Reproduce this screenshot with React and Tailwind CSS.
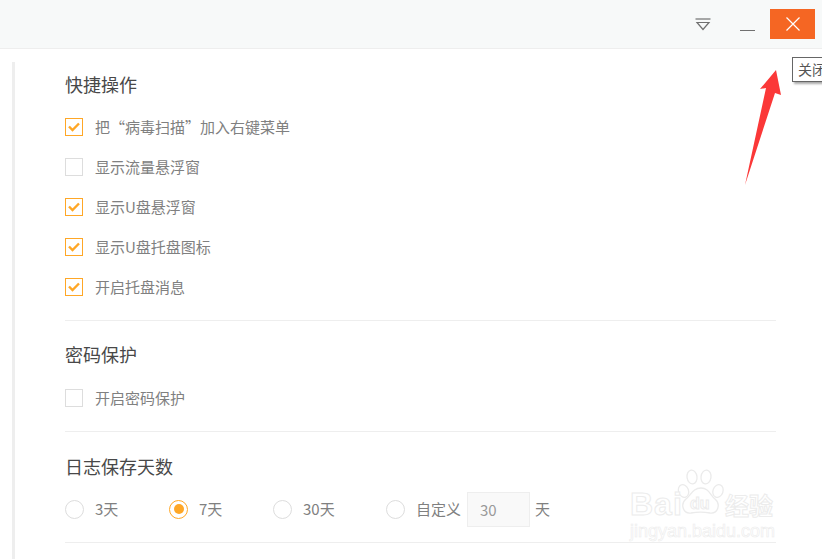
import React from 'react';

const FONT = '"Noto Sans CJK SC", "Liberation Sans", sans-serif';

function CheckRow({ label, checked }) {
  return (
    <div className="flex items-center h-[40px]">
      <span className={`w-[18px] h-[18px] border flex items-center justify-center ${checked ? 'border-[#ffa726]' : 'border-[#dddddd]'}`}>
        {checked && (
          <svg width="12" height="10" viewBox="0 0 12 10" fill="none" stroke="#ffa726" strokeWidth="2.4">
            <path d="M1 4.5L4.5 8L11 1.5" />
          </svg>
        )}
      </span>
      <span className="ml-[12px] text-[15px] leading-[22px] text-[#808080]">{label}</span>
    </div>
  );
}

function Radio({ label, checked, className }) {
  return (
    <div className={`flex items-center ${className}`}>
      <span className={`w-[19px] h-[19px] rounded-full border flex items-center justify-center ${checked ? 'border-[#ffa726]' : 'border-[#dddddd]'}`}>
        {checked && <span className="w-[10px] h-[10px] rounded-full bg-[#ffa726]" />}
      </span>
      <span className="ml-[11px] text-[15px] leading-[22px] text-[#808080]">{label}</span>
    </div>
  );
}

function Section({ title, children, titleClass = 'pt-[24px]' }) {
  return (
    <section className={`border-b border-[#eeeeee] ${titleClass}`}>
      <h2 className="text-[18px] leading-[22px] pb-[2px] text-[#484848]">{title}</h2>
      {children}
    </section>
  );
}

function Watermark() {
  const outline = { WebkitTextStroke: '1px #ececec', color: '#ffffff', fontFamily: '"Liberation Sans", sans-serif' };
  return (
    <div className="absolute left-[630px] top-[468px] w-[150px] h-[75px] select-none">
      <svg width="48" height="50" viewBox="0 0 48 50" className="absolute left-[47px] top-[1px]" fill="none" stroke="#ebebeb" strokeWidth="1.3">
        <ellipse cx="6.5" cy="22" rx="5" ry="6.5" transform="rotate(-20 6.5 22)" />
        <ellipse cx="15" cy="8" rx="5" ry="7" transform="rotate(-8 15 8)" />
        <ellipse cx="29" cy="8" rx="5" ry="7" transform="rotate(8 29 8)" />
        <ellipse cx="41" cy="22" rx="5" ry="6.5" transform="rotate(20 41 22)" />
        <path d="M24 19c-8 0-10 7-15 11-6 5-3 15 5 14 6-1 13-1 19 0 8 1 11-9 5-14-5-4-6-11-14-11z" />
      </svg>
      <span className="absolute left-0 top-[18px] text-[32px] leading-[36px] font-bold tracking-[1px]" style={outline}>Bai</span>
      <span className="absolute left-[60px] top-[27px] text-[16px] leading-[18px] font-bold" style={outline}>du</span>
      <span className="absolute left-[95px] top-[23px] text-[24px] leading-[28px] font-bold" style={{ ...outline, fontFamily: FONT }}>经验</span>
      <span className="absolute left-0 top-[52px] text-[18px] leading-[22px]" style={{ ...outline, WebkitTextStroke: '0.6px #ececec' }}>jingyan.baidu.com</span>
    </div>
  );
}

export default function App() {
  return (
    <div className="relative w-[822px] h-[559px] overflow-hidden bg-white" style={{ fontFamily: FONT }}>
      <header className="h-[49px] bg-[#f7f9f9] border-b border-[#eeeeee] flex items-start justify-end pt-[9px] pr-[7px]">
        <button type="button" className="w-[16px] h-[30px] mr-[29px] flex items-center justify-center">
          <svg width="16" height="13" viewBox="0 0 16 13" fill="none" stroke="#707070" strokeWidth="1.2">
            <path d="M0.5 1h15" />
            <path d="M2 4.5h12L8 11.5z" />
          </svg>
        </button>
        <button type="button" className="w-[15px] h-[30px] mr-[15px] flex items-end justify-center">
          <span className="w-[15px] h-px bg-[#707070] mb-[8px]" />
        </button>
        <button type="button" className="w-[45px] h-[30px] bg-[#f56623] flex items-center justify-center">
          <svg width="16" height="16" viewBox="0 0 16 16" stroke="#ffffff" strokeWidth="1.2">
            <path d="M1.5 1.5l13 13M14.5 1.5l-13 13" />
          </svg>
        </button>
      </header>

      <div className="flex">
        <div className="w-[3px] h-[497px] mt-[13px] ml-[12px] bg-[#eeeeee] shrink-0" />
        <main className="ml-[50px] w-[711px]">
          <Section title="快捷操作">
            <div className="pt-[10px] pb-[13px]">
              <CheckRow checked label="把“病毒扫描”加入右键菜单" />
              <CheckRow label="显示流量悬浮窗" />
              <CheckRow checked label="显示U盘悬浮窗" />
              <CheckRow checked label="显示U盘托盘图标" />
              <CheckRow checked label="开启托盘消息" />
            </div>
          </Section>
          <Section title="密码保护" titleClass="pt-[22px]">
            <div className="pt-[11px] pb-[13px]">
              <CheckRow label="开启密码保护" />
            </div>
          </Section>
          <Section title="日志保存天数" titleClass="pt-[23px]">
            <div className="flex items-center h-[40px] mt-[10px] mb-[13px]">
              <Radio label="3天" className="w-[104px]" />
              <Radio checked label="7天" className="w-[104px]" />
              <Radio label="30天" className="w-[113px]" />
              <Radio label="自定义" />
              <input readOnly value="30" className="ml-[6px] w-[63px] h-[35px] bg-[#f9f9f9] border border-[#eeeeee] pl-[12px] text-[15px] text-[#999999] outline-none" />
              <span className="ml-[5px] text-[15px] leading-[22px] text-[#808080]">天</span>
            </div>
          </Section>
        </main>
      </div>

      {/* annotations over the window */}
      <div className="absolute left-[792px] top-[57px] h-[25px] w-[40px] border border-[#666666] bg-white pl-[5px] text-[14px] leading-[23px] text-[#555555] whitespace-nowrap shadow-[2px_2px_2px_#aaaaaa]">关闭</div>
      <svg className="absolute left-[740px] top-[65px]" width="45" height="125" viewBox="0 0 45 125">
        <path d="M5 120L26 23L20 24L36 5L41 30L35 28z" fill="#fb3838" />
      </svg>
      <Watermark />
    </div>
  );
}
